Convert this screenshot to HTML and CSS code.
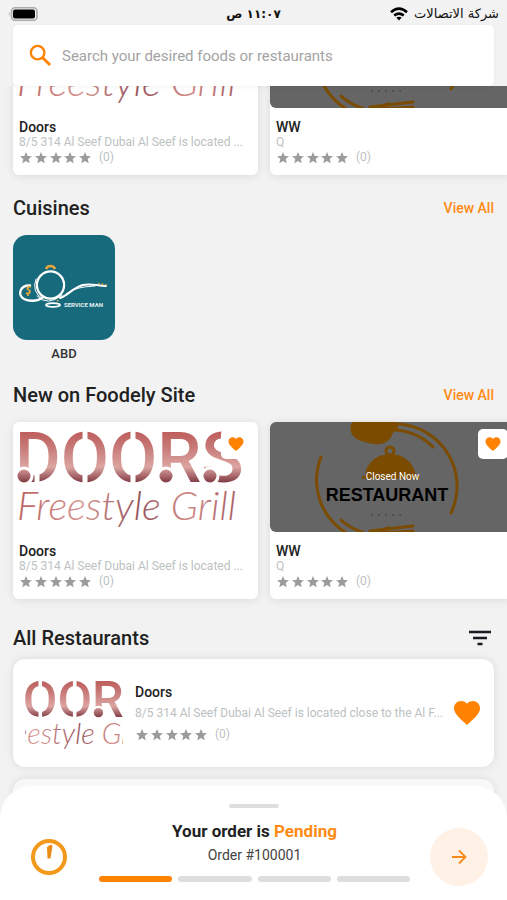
FILE: index.html
```html
<!DOCTYPE html>
<html lang="en">
<head>
<meta charset="utf-8">
<meta name="viewport" content="width=device-width, initial-scale=1">
<title>Foodely</title>
<link rel="stylesheet" href="styles.css">
</head>
<body>
<svg class="defs" aria-hidden="true">
  <defs>
    <linearGradient id="rose" gradientUnits="userSpaceOnUse" x1="0" y1="0" x2="0" y2="61">
      <stop offset="0" stop-color="#b94c4a"/>
      <stop offset=".4" stop-color="#c67876"/>
      <stop offset=".74" stop-color="#dca5a1"/>
      <stop offset="1" stop-color="#7d3640"/>
    </linearGradient>
    <linearGradient id="script" gradientUnits="userSpaceOnUse" x1="0" y1="0" x2="230" y2="0">
      <stop offset="0" stop-color="#b8605f"/>
      <stop offset=".3" stop-color="#d89590"/>
      <stop offset=".55" stop-color="#93525c"/>
      <stop offset=".75" stop-color="#d28b87"/>
      <stop offset="1" stop-color="#a45c62"/>
    </linearGradient>
    <g id="doors">
      <text class="doors-word" x="2" y="60">DOORS</text>
      <path stroke="#fff" stroke-width="5" d="M72 4V20M72 50V64M120 4V20M120 50V64M24 50V64"/>
      <g fill="url(#rose)" stroke="#fff" stroke-width="3">
        <circle cx="11" cy="54" r="8"/><circle cx="153" cy="54" r="8"/><circle cx="197" cy="54" r="8"/>
      </g>
      <text class="doors-script" x="4" y="98">Freestyle Grill</text>
    </g>
    <g id="restaurant">
      <g fill="none" stroke="#7b4b00" stroke-width="3" stroke-linecap="round">
        <path d="M51 35C40 64 50 94 76 111"/>
        <path d="M127 2C172 4 200 50 181 91"/>
        <path d="M125 8C140 9 153 15 163 25"/>
        <path d="M71 98C77 104 86 108 94 111"/>
        <path d="M100 109L143 104M112 111L143 109"/>
        <circle cx="120" cy="29" r="4"/>
      </g>
      <path fill="#7b4b00" d="M82 0C78 9 82 17 95 20C110 25 119 21 122 13C123 9 127 9 128 6L128 0ZM95 54C96 41 107 32 120 32C134 32 144 41 146 54ZM92 54H149V57H92ZM104 109L120 104L116 111Z"/>
      <text class="restaurant-word" x="117" y="79" text-anchor="middle">RESTAURANT</text>
      <path stroke="#4f4f4f" stroke-width="2" stroke-dasharray="2 5" d="M101 93H131"/>
    </g>
    <path id="heart" d="M12 21.35l-1.45-1.32C5.4 15.36 2 12.28 2 8.5 2 5.42 4.42 3 7.5 3c1.74 0 3.41.81 4.5 2.09C13.09 3.81 14.76 3 16.5 3 19.58 3 22 5.42 22 8.5c0 3.78-3.4 6.86-8.55 11.54L12 21.35z"/>
    <g id="stars">
      <path id="star" d="M7 10.1L10.7 12.3 9.7 8.1 13 5.3 8.7 4.9 7 1 5.3 4.9 1 5.3 4.3 8.1 3.3 12.3z"/>
      <use href="#star" x="15"/><use href="#star" x="30"/><use href="#star" x="44"/><use href="#star" x="59"/>
    </g>
  </defs>
</svg>

<header class="top">
  <div class="status" dir="ltr">
    <svg class="battery" viewBox="0 0 30 14" role="img" aria-label="Battery"><rect x="3.5" y=".8" width="25.5" height="12.4" rx="3.5" fill="#f2f2f2" stroke="#aaa" stroke-width="1.6"/><rect x="5" y="2.5" width="22" height="9" rx="2" fill="#000"/><path d="M1.5 4.5Q0 7 1.5 9.5z" fill="#999"/></svg>
    <span class="time" dir="rtl" lang="ar">١١:٠٧ ص</span>
    <span class="carrier">
      <svg class="wifi" viewBox="0 0 18 14" aria-hidden="true"><path fill="none" stroke="#000" stroke-width="2.6" d="M1 5.2Q9-2 17 5.2M4.2 8.6Q9 4.6 13.8 8.6"/><path d="M6.3 10.6Q9 8.7 11.7 10.6L9 13.6z"/></svg>
      <span dir="rtl" lang="ar">شركة الاتصالات</span>
    </span>
  </div>
  <label class="search">
    <svg class="search-icon" viewBox="0 0 24 24" aria-hidden="true"><circle cx="9" cy="9" r="7" fill="none" stroke="#ff8200" stroke-width="2.4"/><path d="M14 14L22 22" stroke="#ff8200" stroke-width="3"/></svg>
    <input type="search" placeholder="Search your desired foods or restaurants" aria-label="Search">
  </label>
</header>

<main>
  <section class="popular" aria-label="Restaurants">
    <div class="carousel">
      <article class="card">
        <svg class="cover" viewBox="0 0 245 110" preserveAspectRatio="xMidYMid slice" aria-hidden="true"><use href="#doors"/></svg>
        <div class="card-body">
          <h3>Doors</h3>
          <p class="address">8/5 314 Al Seef Dubai Al Seef is located ...</p>
          <div class="rating"><svg viewBox="0 0 74 14" role="img" aria-label="0 of 5"><use href="#stars"/></svg><span>(0)</span></div>
        </div>
      </article>
      <article class="card">
        <svg class="cover closed" viewBox="0 0 245 110" preserveAspectRatio="xMidYMid slice" aria-hidden="true"><use href="#restaurant"/></svg>
        <div class="card-body">
          <h3>WW</h3>
          <p class="address">Q</p>
          <div class="rating"><svg viewBox="0 0 74 14" role="img" aria-label="0 of 5"><use href="#stars"/></svg><span>(0)</span></div>
        </div>
      </article>
    </div>
  </section>

  <section class="cuisines">
    <div class="head"><h2>Cuisines</h2><a href="#">View All</a></div>
    <a class="cuisine" href="#">
      <svg class="tile" viewBox="0 0 102 105" aria-hidden="true">
        <g fill="none" stroke="#fff" stroke-linecap="round">
          <circle cx="37.5" cy="50" r="13.6" stroke-width="2.2"/>
          <path stroke-width="1" d="M23 44Q18 57 30 64M24 61Q35 72 49 60"/>
          <path stroke-width="2.4" d="M17 50.5C7 50 4 60 11 64C17 67 25 66 29 63"/>
          <path stroke-width="2" d="M47 63C56 60 59 53 70 50C78 48 84 51 93 51"/>
          <path stroke-width="1" d="M53 59C65 51 74 52 82 51"/>
          <ellipse cx="40" cy="70" rx="7" ry="1.8" stroke-width="1.8"/>
        </g>
        <g fill="none" stroke="#e7a63c">
          <path stroke-width="2.6" d="M33 34Q34 31 37.5 31Q41 31 42 34"/>
          <path stroke-width="1.8" d="M18 52Q14 51 14.5 54Q18 56 16.5 58Q15 59 13 58M15 59V61"/>
          <path stroke-width="1.6" stroke-dasharray="1.6 2" d="M85 48.500L94 50M44 66L47 64"/>
        </g>
        <text class="tile-word" x="51" y="72">SERVICE MAN</text>
      </svg>
      <span>ABD</span>
    </a>
  </section>

  <section class="newest">
    <div class="head"><h2>New on Foodely Site</h2><a href="#">View All</a></div>
    <div class="carousel">
      <article class="card">
        <svg class="cover" viewBox="0 0 245 110" preserveAspectRatio="xMidYMid slice" aria-hidden="true"><use href="#doors"/></svg>
        <button class="fav" type="button" aria-label="Favourite Doors"><svg viewBox="0 0 24 24"><use href="#heart"/></svg></button>
        <div class="card-body">
          <h3>Doors</h3>
          <p class="address">8/5 314 Al Seef Dubai Al Seef is located ...</p>
          <div class="rating"><svg viewBox="0 0 74 14" role="img" aria-label="0 of 5"><use href="#stars"/></svg><span>(0)</span></div>
        </div>
      </article>
      <article class="card">
        <svg class="cover closed" viewBox="0 0 245 110" preserveAspectRatio="xMidYMid slice" aria-hidden="true"><use href="#restaurant"/></svg>
        <span class="closed-label">Closed Now</span>
        <button class="fav" type="button" aria-label="Favourite WW"><svg viewBox="0 0 24 24"><use href="#heart"/></svg></button>
        <div class="card-body">
          <h3>WW</h3>
          <p class="address">Q</p>
          <div class="rating"><svg viewBox="0 0 74 14" role="img" aria-label="0 of 5"><use href="#stars"/></svg><span>(0)</span></div>
        </div>
      </article>
    </div>
  </section>

  <section class="all">
    <div class="head"><h2>All Restaurants</h2>
      <button class="filter" type="button" aria-label="Filter"><svg viewBox="0 0 24 16"><path stroke="#1b1a22" stroke-width="2.4" d="M1 2H23M5 8H19M9.500 14H14.500"/></svg></button>
    </div>
    <article class="row">
      <svg class="thumb" viewBox="51 -4 136 117" aria-hidden="true"><use href="#doors"/></svg>
      <div class="row-body">
        <h3>Doors</h3>
        <p class="address">8/5 314 Al Seef Dubai Al Seef is located close to the Al F...</p>
        <div class="rating"><svg viewBox="0 0 74 14" role="img" aria-label="0 of 5"><use href="#stars"/></svg><span>(0)</span></div>
      </div>
      <button class="row-fav" type="button" aria-label="Favourite Doors"><svg viewBox="2 3 20 18.4"><use href="#heart"/></svg></button>
    </article>
    <article class="row next"></article>
  </section>
</main>

<aside class="sheet">
  <div class="handle"></div>
  <div class="order">
    <svg class="timer" viewBox="0 0 36 36" aria-hidden="true"><circle cx="18" cy="18" r="16" fill="none" stroke="#f2981b" stroke-width="4"/><path fill="#e98d17" d="M16 8L20 5.5 21.5 7 19.5 19.5H16.5Z"/></svg>
    <div class="order-info">
      <p class="order-title">Your order is <strong>Pending</strong></p>
      <p class="order-number">Order #100001</p>
      <div class="steps"><i class="done"></i><i></i><i></i><i></i></div>
    </div>
    <button class="go" type="button" aria-label="Open order"><svg viewBox="0 0 16 16"><path fill="none" stroke="#f78a1a" stroke-width="1.8" d="M1 8H14.500M8 1.500L14.500 8L8 14.500"/></svg></button>
  </div>
</aside>
</body>
</html>
```
FILE: styles.css
```css
* { box-sizing: border-box; margin: 0; padding: 0; }
html { background: #f2f2f2; }
body {
  height: 100vh;
  overflow: hidden;
  background: #f2f2f2;
  color: #212121;
  font-family: Roboto, "Noto Sans", sans-serif;
  font-size: 14px;
}
button { border: 0; background: none; display: grid; place-items: center; }
a { color: inherit; text-decoration: none; }
svg { display: block; }
.defs { position: absolute; width: 0; height: 0; }

.doors-word { font: 500 70px Roboto, sans-serif; fill: url(#rose); }
.doors-script { font: italic 300 40px Lato, sans-serif; fill: url(#script); }
.restaurant-word { font: bold 18px "Liberation Sans", Arial, sans-serif; fill: #000; }
.tile-word { font: bold 6px Roboto, sans-serif; fill: #e6f1f2; }

.top { position: relative; z-index: 2; }
.top::before {
  content: "";
  position: absolute;
  inset: 0;
  z-index: -1;
  background: #f2f2f2;
}
.status {
  display: grid;
  grid-template-columns: 1fr auto 1fr;
  align-items: center;
  height: 25px;
  padding: 2px 8px 0;
  color: #111;
  font-family: "DejaVu Sans", sans-serif;
  font-size: 13px;
}
.battery { width: 30px; height: 14px; }
.time { font-size: 12px; font-weight: bold; }
.carrier { display: flex; align-items: center; justify-content: flex-end; gap: 6px; }
.wifi { width: 18px; height: 14px; }
.search {
  display: flex;
  align-items: center;
  gap: 10px;
  height: 61px;
  margin: 0 13px;
  padding: 0 16px;
  border-radius: 5px;
  background: #fff;
  box-shadow: 0 1px 4px rgba(0, 0, 0, .05);
}
.search-icon { flex: none; width: 23px; height: 23px; }
.search input {
  flex: 1;
  min-width: 0;
  border: 0;
  outline: 0;
  background: none;
  font: 15px Roboto, sans-serif;
}
.search input::placeholder { color: #a3a3a3; opacity: 1; }

main { padding-left: 13px; }
.popular { margin-top: -88px; }
.head {
  display: flex;
  align-items: center;
  justify-content: space-between;
  height: 24px;
  margin-right: 13px;
}
.head h2 { font-size: 20px; line-height: 24px; font-weight: 500; }
.head a { color: #ff8a14; font-weight: 500; }
.cuisines { margin-top: 21px; }
.newest { margin-top: 19px; }
.all { margin-top: 27px; }

.carousel { display: flex; gap: 12px; }
.card {
  position: relative;
  flex: none;
  width: 245px;
  height: 177px;
  border-radius: 6px;
  background: #fff;
  box-shadow: 0 1px 8px rgba(0, 0, 0, .1);
}
.cover { width: 100%; height: 110px; border-radius: 6px; }
.closed { background: #656565; }
.closed-label {
  position: absolute;
  top: 48px;
  left: 0;
  width: 100%;
  color: #fff;
  font-size: 10px;
  line-height: 14px;
  text-align: center;
}
.fav {
  position: absolute;
  top: 7px;
  right: 7px;
  width: 30px;
  height: 30px;
  border-radius: 5px;
  background: #fff;
}
.fav svg { width: 18px; height: 18px; fill: #ff8200; }
.card-body { padding: 11px 6px 0; }
h3 { font-size: 14px; line-height: 16px; font-weight: 500; }
.address {
  overflow: hidden;
  color: #bcc1c1;
  font-size: 12px;
  line-height: 15px;
  text-overflow: ellipsis;
  white-space: nowrap;
}
.rating { display: flex; align-items: center; gap: 6px; color: #bcc1c1; font-size: 12px; line-height: 15px; }
.rating svg { width: 74px; height: 14px; fill: #9b9b9b; }

.cuisine { display: block; width: 102px; margin-top: 15px; text-align: center; }
.tile { width: 102px; height: 105px; border-radius: 14px; background: #176a7b; }
.cuisine span { display: block; margin-top: 4px; font-size: 13px; font-weight: 500; line-height: 20px; color: #333; }
.newest .carousel { margin-top: 15px; }

.filter { width: 28px; height: 24px; }
.filter svg { width: 24px; height: 16px; }
.row {
  display: flex;
  align-items: center;
  gap: 12px;
  height: 108px;
  margin: 9px 13px 12px 0;
  padding: 0 14px 0 12px;
  border-radius: 12px;
  background: #fff;
  box-shadow: 0 0 8px rgba(0, 0, 0, .1);
}
.row.next { background: #f8f8f8; }
.thumb { flex: none; width: 98px; height: 84px; }
.row-body { flex: 1; min-width: 0; }
.row-body .address { margin: 6px 0; }
.row-fav { flex: none; width: 26px; margin-left: -6px; }
.row-fav svg { width: 26px; height: 24px; fill: #ff8200; }

.sheet {
  position: fixed;
  inset: auto 0 0;
  z-index: 3;
  height: 114px;
  padding-top: 18px;
  border-radius: 32px 32px 0 0;
  background: #fff;
}
.handle { width: 50px; height: 4px; margin: 0 auto; border-radius: 2px; background: #dedede; }
.order {
  display: grid;
  grid-template-columns: 60px 1fr 58px;
  gap: 20px;
  align-items: start;
  padding: 12px 19px;
}
.timer { width: 36px; height: 36px; margin: 19px auto 0; }
.order-info { text-align: center; }
.order-title { font-size: 17px; line-height: 22px; font-weight: 700; }
.order-title strong { color: #ff8a14; font-weight: inherit; }
.order-number { margin-top: 3px; line-height: 20px; color: #444; }
.steps { display: grid; grid-template-columns: repeat(4, 1fr); gap: 6px; margin-top: 11px; }
.steps i { height: 6px; border-radius: 3px; background: #dedede; }
.steps .done { background: #ff8200; }
.go { width: 58px; height: 58px; margin-top: 8px; border-radius: 50%; background: #fff1e6; }
.go svg { width: 16px; height: 16px; }
```
